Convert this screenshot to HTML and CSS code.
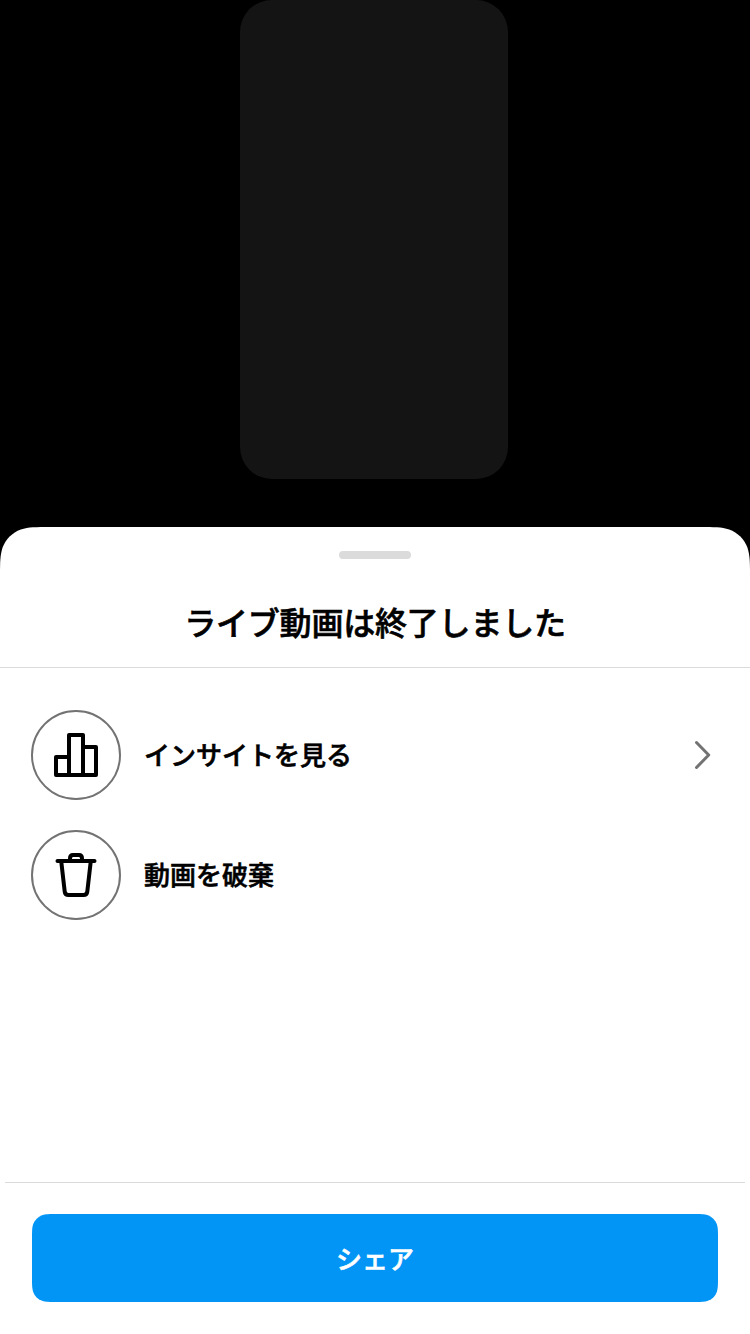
FILE: index.html
```html
<!DOCTYPE html>
<html lang="ja">
<head>
<meta charset="utf-8">
<title>ライブ動画</title>
<link rel="stylesheet" href="styles.css">
</head>
<body>
<div class="screen">
  <div class="stage"><div class="preview"></div></div>
  <main class="sheet">
    <header class="sheet-header">
      <div class="grabber"></div>
      <h1 class="title">ライブ動画は終了しました</h1>
    </header>
    <div class="actions">
      <div class="row">
        <span class="icon-circle">
          <svg width="48" height="48" viewBox="0 0 48 48" fill="none" stroke="#000" stroke-width="4" stroke-linejoin="round" stroke-linecap="round">
            <path d="M17 44H4V26H17M31 16H44V44H31"/>
            <path d="M17 44V4H31V44Z"/>
          </svg>
        </span>
        <span class="label">インサイトを見る</span>
        <svg class="chevron" width="18" height="30" viewBox="0 0 18 30" fill="none" stroke="#737373" stroke-width="3" stroke-linecap="round" stroke-linejoin="round"><path d="M2.5 2.5L14.7 15L2.5 27.5"/></svg>
      </div>
      <div class="row">
        <span class="icon-circle">
          <svg width="48" height="48" viewBox="0 0 48 48" fill="none" stroke="#000" stroke-width="4" stroke-linejoin="round" stroke-linecap="round">
            <path d="M5.5 10H42.5"/>
            <path d="M18 9V7.5Q18 4 21 4H27Q30 4 30 7.5V9"/>
            <path d="M9.2 10L12.7 40.5Q13 44 16.5 44H31.5Q35 44 35.3 40.5L38.8 10"/>
          </svg>
        </span>
        <span class="label">動画を破棄</span>
      </div>
    </div>
    <footer class="footer"><button class="share">シェア</button></footer>
  </main>
</div>
</body>
</html>
```
FILE: styles.css
```css
* { box-sizing: border-box; }
body {
  margin: 0;
  background: #000;
  color: #000;
  font-family: "Noto Sans CJK JP", sans-serif;
}
.screen {
  width: 750px;
  height: 1334px;
  display: flex;
  flex-direction: column;
  overflow: hidden;
}
.stage { height: 527px; padding-left: 240px; }
.preview {
  width: 268px;
  height: 479px;
  border-radius: 32px;
  background: #141414;
}
.sheet {
  flex: 1;
  display: flex;
  flex-direction: column;
  background: #fff;
  /* continuous-curvature top corners */
  clip-path: path("M0 50C0 36 0 28.6 2.5 20.8C5.6 12.3 12.3 5.6 20.8 2.5C28.6 0 36 0 50 0H700C714 0 721.4 0 729.2 2.5C737.7 5.6 744.4 12.3 747.5 20.8C750 28.6 750 36 750 50V807H0Z");
}
.sheet-header {
  height: 141px;
  padding-top: 24px;
  display: flex;
  flex-direction: column;
  align-items: center;
  border-bottom: 1px solid #dbdbdb;
}
.grabber { width: 72px; height: 8px; border-radius: 4px; background: #dbdbdb; }
.title {
  margin: 38px 0 0;
  font-size: 32px;
  line-height: 48px;
  font-weight: 500;
  letter-spacing: -0.2px;
  -webkit-text-stroke: 0.6px currentColor;
  white-space: nowrap;
}
.actions {
  flex: 1;
  padding: 42px 38px 0 31px;
  display: flex;
  flex-direction: column;
  gap: 30px;
}
.row { height: 90px; display: flex; align-items: center; }
.icon-circle {
  width: 90px;
  height: 90px;
  border: 2px solid #737373;
  border-radius: 50%;
  display: flex;
  align-items: center;
  justify-content: center;
}
.label {
  margin-left: 23px;
  padding-bottom: 2px;
  font-size: 26px;
  line-height: 40px;
  font-weight: 500;
  -webkit-text-stroke: 0.6px currentColor;
}
.chevron { margin-left: auto; }
.footer {
  height: 152px;
  margin: 0 5px;
  padding: 31px 27px 0;
  border-top: 1px solid #dbdbdb;
}
.share {
  display: block;
  width: 686px;
  height: 88px;
  padding: 0;
  border: 0;
  background: #0295f6;
  color: #fff;
  font: 500 26px/88px "Noto Sans CJK JP", sans-serif;
  -webkit-text-stroke: 0.6px currentColor;
  clip-path: path("M0 24.5C0 17.4 0 13.9 1.2 10.1C2.7 6 6 2.7 10.1 1.2C13.9 0 17.4 0 24.5 0H661.5C668.6 0 672.1 0 675.9 1.2C680 2.7 683.3 6 684.8 10.1C686 13.9 686 17.4 686 24.5V63.5C686 70.6 686 74.1 684.8 77.9C683.3 82 680 85.3 675.9 86.8C672.1 88 668.6 88 661.5 88H24.5C17.4 88 13.9 88 10.1 86.8C6 85.3 2.7 82 1.2 77.9C0 74.1 0 70.6 0 63.5Z");
}
```
